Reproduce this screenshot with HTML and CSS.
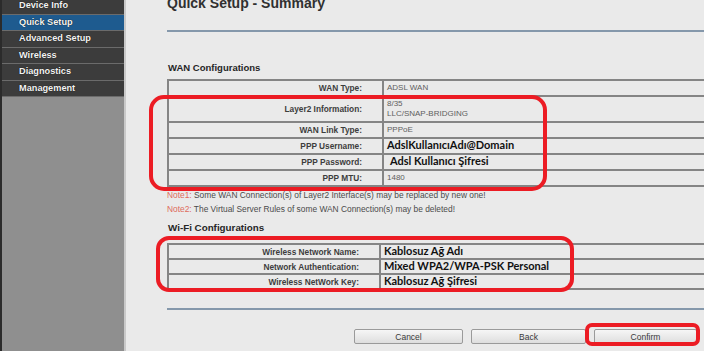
FILE: index.html
```html
<!DOCTYPE html>
<html lang="en">
<head>
    <meta charset="UTF-8">
    <meta name="viewport" content="width=device-width, initial-scale=1.0">
    <title>Quick Setup - Summary</title>
    <link rel="stylesheet" href="styles.css">
</head>
<body>
    <div class="page">
        <nav class="sidebar">
            <ul class="menu">
                <li>Device Info</li>
                <li class="active">Quick Setup</li>
                <li>Advanced Setup</li>
                <li>Wireless</li>
                <li>Diagnostics</li>
                <li>Management</li>
            </ul>
        </nav>

        <main class="content">
            <h1 class="title">Quick Setup - Summary</h1>
            <div class="rule"></div>

            <h2 class="section">WAN Configurations</h2>
            <table class="summary wan">
                <tr><td class="label">WAN Type:</td><td class="value">ADSL WAN</td></tr>
                <tr class="tall"><td class="label">Layer2 Information:</td><td class="value">8/35<br>LLC/SNAP-BRIDGING</td></tr>
                <tr><td class="label">WAN Link Type:</td><td class="value">PPPoE</td></tr>
                <tr><td class="label">PPP Username:</td><td class="value"><span class="filled">AdslKullanıcıAdı@Domain</span></td></tr>
                <tr><td class="label">PPP Password:</td><td class="value"><span class="filled shift">Adsl Kullanıcı Şifresi</span></td></tr>
                <tr><td class="label">PPP MTU:</td><td class="value">1480</td></tr>
            </table>
            <p class="note"><span class="tag">Note1:</span> Some WAN Connection(s) of Layer2 Interface(s) may be replaced by new one!</p>
            <p class="note"><span class="tag">Note2:</span> The Virtual Server Rules of some WAN Connection(s) may be deleted!</p>

            <h2 class="section wifi-head">Wi-Fi Configurations</h2>
            <table class="summary wifi">
                <tr><td class="label">Wireless Network Name:</td><td class="value"><span class="filled">Kablosuz Ağ Adı</span></td></tr>
                <tr><td class="label">Network Authentication:</td><td class="value"><span class="filled">Mixed WPA2/WPA-PSK Personal</span></td></tr>
                <tr><td class="label">Wireless NetWork Key:</td><td class="value"><span class="filled">Kablosuz Ağ Şifresi</span></td></tr>
            </table>

            <div class="rule bottom"></div>
            <div class="actions">
                <button class="btn cancel">Cancel</button>
                <button class="btn back">Back</button>
                <button class="btn confirm">Confirm</button>
            </div>
        </main>

        <!-- red marker circles drawn over the screenshot -->
        <div class="mark mark-wan"></div>
        <div class="mark mark-wifi"></div>
        <div class="mark mark-confirm"></div>
    </div>
</body>
</html>
```

FILE: styles.css
```css
html, body {
    margin: 0;
    padding: 0;
}
body {
    background-color: #eaeaea;
    font-family: 'Liberation Sans', Arial, sans-serif;
    overflow: hidden;
}
.page {
    position: relative;
    display: flex;
    width: 704px;
    height: 351px;
    overflow: hidden;
}
.sidebar {
    flex: 0 0 122px;
    background-color: #8f8f8f;
    border-left: 2px solid #2b2b2b;
    border-right: 2px solid #c9c9c9;
}
.menu {
    list-style: none;
    margin: -2px 0 0;
    padding: 0;
}
.menu li {
    height: 15.5px;
    line-height: 15.5px;
    padding-left: 17px;
    background-color: #3c3c3c;
    border-bottom: 1px solid #6b6b6b;
    color: #f4f4f4;
    font-size: 9.2px;
    font-weight: bold;
    text-shadow: 0 0 1px #000;
}
.menu li.active {
    background-color: #1e5b8f;
}
.content {
    flex: 0 0 auto;
    width: 560px;
    padding-left: 41px;
}
.title {
    margin: -5px 0 0;
    font-size: 14px;
    line-height: 16px;
    color: #303030;
}
.rule {
    margin-top: 19px;
    border-top: 2px solid #8598ab;
}
.section {
    margin: 30px 0 0 1px;
    font-size: 9.5px;
    line-height: 12px;
    color: #262626;
}
.summary {
    margin-top: 5px;
    width: 560px;
    border-collapse: collapse;
    font-size: 8px;
}
.summary td {
    height: 14px;
    padding: 0;
    border: 2px solid #858585;
    line-height: 10px;
}
.summary .label {
    width: 193px;
    padding-right: 20px;
    text-align: right;
    font-weight: bold;
    font-size: 8.3px;
    color: #3d3d3d;
}
.summary .value {
    padding-left: 3px;
    color: #5e5e5e;
}
.summary .tall td {
    height: 24px;
    line-height: 10.5px;
}
.filled {
    font-family: Lato, 'Liberation Sans', sans-serif;
    font-weight: bold;
    font-size: 11px;
    color: #111;
}
.filled.shift {
    padding-left: 3px;
}
.note {
    margin: 2px 0 0;
    font-size: 8.4px;
    line-height: 12px;
    color: #4a4a4a;
}
.note .tag {
    color: #de6b5c;
}
.wifi-head {
    margin-top: 7px;
    font-size: 9.8px;
}
.wifi {
    margin-top: 9px;
}
.wifi td {
    height: 13px;
}
.wifi .label {
    width: 190px;
}
.rule.bottom {
    margin-top: 18px;
}
.actions {
    display: flex;
    justify-content: flex-end;
    gap: 8px;
    width: 530px;
    margin-top: 19px;
}
.btn {
    height: 15px;
    padding: 0;
    border: 1px solid #9a9a9a;
    border-radius: 2px;
    background: linear-gradient(#f6f6f6, #dedede);
    font-family: 'Liberation Sans', Arial, sans-serif;
    font-size: 8.5px;
    color: #3a3a3a;
}
.cancel { width: 109px; }
.back { width: 115px; }
.confirm { width: 103px; }
.mark {
    position: absolute;
    border: 4px solid #ec1c24;
    border-radius: 15px;
}
.mark-wan {
    left: 149px;
    top: 95px;
    width: 390px;
    height: 88px;
}
.mark-wifi {
    left: 156px;
    top: 236px;
    width: 410px;
    height: 48px;
    border-radius: 13px;
}
.mark-confirm {
    left: 585px;
    top: 323px;
    width: 107px;
    height: 15px;
    border-radius: 7px;
}
```
